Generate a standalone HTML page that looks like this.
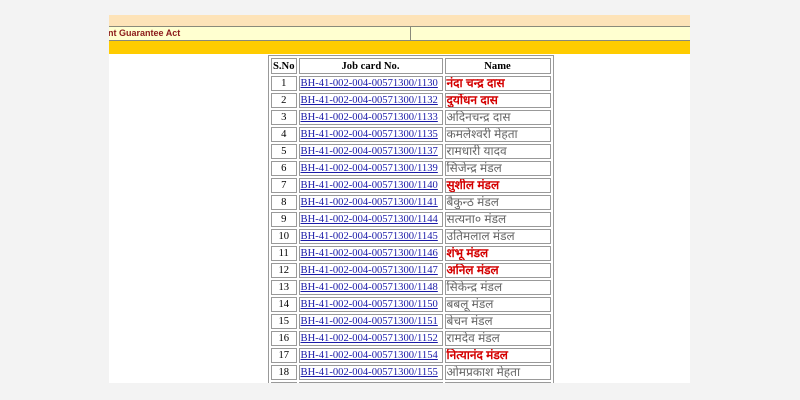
<!DOCTYPE html><html><head><meta charset="utf-8"><style>
body{margin:0;background:#f3f3f3;width:800px;height:400px;overflow:hidden;font-family:"Liberation Serif",serif}
#p{position:absolute;left:109px;top:15px;width:581px;height:368px;background:#fff;overflow:hidden}
.b1{position:absolute;left:0;top:0;width:581px;height:11px;background:#fde3b8;border-bottom:1px solid #8a8a7a}
.b2{position:absolute;left:0;top:12px;width:581px;height:13px;background:#ffffd0;border-bottom:1px solid #8a8a7a}
.b2 span{position:absolute;left:-185px;top:0;font:bold 9px "Liberation Sans",sans-serif;color:#8b1a1a;line-height:13px;white-space:nowrap}
.b2 i{position:absolute;left:301px;top:0;width:1px;height:13px;background:#8a8a7a}
.b3{position:absolute;left:0;top:26px;width:581px;height:13px;background:#ffcc00}
table{position:absolute;left:159px;top:40px;border-collapse:separate;border-spacing:2px;border:1px solid #999;font-size:10.6px;table-layout:fixed}
td,th{border:1px solid #999;height:13px;padding:0 1px;line-height:13px;white-space:nowrap;overflow:hidden}
th{font-weight:bold;text-align:center;height:14px}
td.n{text-align:center}
td a{color:#1a1aa8;text-decoration:underline}
td.m{color:#666;font-family:"Liberation Sans","Noto Sans CJK SC",sans-serif;font-size:12px}
td.r{color:#d40000;font-weight:bold}
</style></head><body><div id="p">
<div class="b1"></div><div class="b2"><span>Mahatma Gandhi National Rural Employment Guarantee Act</span><i></i></div><div class="b3"></div>
<table>
<colgroup><col style="width:22px"><col style="width:144px"><col style="width:106px"></colgroup>
<tr><th>S.No</th><th>Job card No.</th><th>Name</th></tr>
<tr><td class="n">1</td><td><a>BH-41-002-004-00571300/1130</a></td><td class="m r">नंदा चन्द्र दास</td></tr>
<tr><td class="n">2</td><td><a>BH-41-002-004-00571300/1132</a></td><td class="m r">दुर्योधन दास</td></tr>
<tr><td class="n">3</td><td><a>BH-41-002-004-00571300/1133</a></td><td class="m">अदिनचन्द्र दास</td></tr>
<tr><td class="n">4</td><td><a>BH-41-002-004-00571300/1135</a></td><td class="m">कमलेश्वरी मेहता</td></tr>
<tr><td class="n">5</td><td><a>BH-41-002-004-00571300/1137</a></td><td class="m">रामधारी यादव</td></tr>
<tr><td class="n">6</td><td><a>BH-41-002-004-00571300/1139</a></td><td class="m">सिजेन्द्र मंडल</td></tr>
<tr><td class="n">7</td><td><a>BH-41-002-004-00571300/1140</a></td><td class="m r">सुशील मंडल</td></tr>
<tr><td class="n">8</td><td><a>BH-41-002-004-00571300/1141</a></td><td class="m">बैकुन्ठ मंडल</td></tr>
<tr><td class="n">9</td><td><a>BH-41-002-004-00571300/1144</a></td><td class="m">सत्यना० मंडल</td></tr>
<tr><td class="n">10</td><td><a>BH-41-002-004-00571300/1145</a></td><td class="m">उतिमलाल मंडल</td></tr>
<tr><td class="n">11</td><td><a>BH-41-002-004-00571300/1146</a></td><td class="m r">शंभू मंडल</td></tr>
<tr><td class="n">12</td><td><a>BH-41-002-004-00571300/1147</a></td><td class="m r">अनिल मंडल</td></tr>
<tr><td class="n">13</td><td><a>BH-41-002-004-00571300/1148</a></td><td class="m">सिकेन्द्र मंडल</td></tr>
<tr><td class="n">14</td><td><a>BH-41-002-004-00571300/1150</a></td><td class="m">बबलू मंडल</td></tr>
<tr><td class="n">15</td><td><a>BH-41-002-004-00571300/1151</a></td><td class="m">बेचन मंडल</td></tr>
<tr><td class="n">16</td><td><a>BH-41-002-004-00571300/1152</a></td><td class="m">रामदेव मंडल</td></tr>
<tr><td class="n">17</td><td><a>BH-41-002-004-00571300/1154</a></td><td class="m r">नित्यानंद मंडल</td></tr>
<tr><td class="n">18</td><td><a>BH-41-002-004-00571300/1155</a></td><td class="m">ओमप्रकाश मेहता</td></tr>
<tr><td class="n">19</td><td><a>BH-41-002-004-00571300/1156</a></td><td class="m">रामविलास मेहता</td></tr>
</table></div></body></html>
